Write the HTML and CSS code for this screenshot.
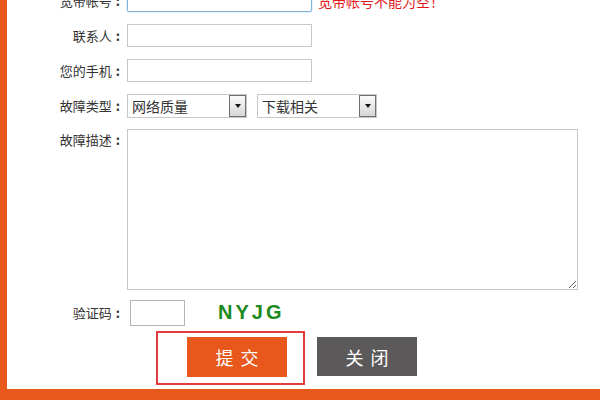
FILE: index.html
```html
<!DOCTYPE html>
<html lang="zh-CN">
<head>
<meta charset="utf-8">
<title>故障申报</title>
<link rel="stylesheet" href="styles.css">
</head>
<body>
<div class="frame">
  <form class="form">
    <div class="row r1">
      <label class="label">宽带帐号<span class="colon">:</span></label>
      <input class="field focus" type="text">
      <span class="error">宽带帐号不能为空！</span>
    </div>
    <div class="row r2">
      <label class="label">联系人<span class="colon">:</span></label>
      <input class="field" type="text">
    </div>
    <div class="row r2">
      <label class="label">您的手机<span class="colon">:</span></label>
      <input class="field" type="text">
    </div>
    <div class="row r2">
      <label class="label">故障类型<span class="colon">:</span></label>
      <div class="select"><span class="sel-text">网络质量</span><span class="sel-btn"><span class="tri"></span></span></div>
      <div class="select second"><span class="sel-text">下载相关</span><span class="sel-btn"><span class="tri"></span></span></div>
    </div>
    <div class="row r-desc">
      <label class="label top">故障描述<span class="colon">:</span></label>
      <textarea class="desc"></textarea>
    </div>
    <div class="row r-code">
      <label class="label">验证码<span class="colon">:</span></label>
      <input class="code" type="text">
      <span class="captcha">NYJG</span>
    </div>
    <div class="row r-btns">
      <div class="outline">
        <button type="button" class="btn submit">提交</button>
      </div>
      <button type="button" class="btn close">关闭</button>
    </div>
  </form>
</div>
</body>
</html>
```

FILE: styles.css
```css
html, body {
  margin: 0;
  padding: 0;
  background: #fff;
  overflow: hidden;
}
.frame {
  width: 600px;
  height: 400px;
  box-sizing: border-box;
  border-left: 7px solid #e8581d;
  border-bottom: 11px solid #e8581d;
  overflow: hidden;
  font-family: "Noto Sans CJK SC", "Microsoft YaHei", sans-serif;
  font-size: 13px;
  color: #333;
}
.form {
  display: flex;
  flex-direction: column;
  margin-top: -11px;
}
.row {
  display: flex;
  align-items: center;
}
.r2 { margin-top: 12px; }
.r-desc { margin-top: 11px; align-items: flex-start; }
.r-code { margin-top: 10px; }
.r-btns { margin-top: 5px; padding-left: 149px; align-items: flex-start; }
.label {
  width: 115px;
  margin-right: 5px;
  text-align: right;
  font-size: 13px;
  color: #333;
  line-height: 16px;
}
.colon {
  display: inline-block;
  margin-left: 4px;
  margin-right: 2px;
  font-weight: bold;
}
.label.top { margin-top: 3px; }
.field {
  width: 185px;
  height: 23px;
  box-sizing: border-box;
  border: 1px solid #c8c8c8;
  padding: 0 4px;
  margin: 0;
  outline: none;
}
.field.focus {
  border-color: #7fb3d6;
  border-radius: 2px;
  box-shadow: 0 0 2px #a9d0ea;
}
.error {
  margin-left: 6px;
  color: #e3191c;
  font-size: 14px;
}
.select {
  width: 120px;
  height: 24px;
  box-sizing: border-box;
  border: 1px solid #c8c8c8;
  display: flex;
  align-items: center;
  justify-content: space-between;
  background: #fff;
}
.select.second { margin-left: 10px; }
.sel-text {
  padding-left: 4px;
  color: #333;
  font-size: 14px;
}
.sel-btn {
  width: 15px;
  height: 20px;
  border: 1px solid #707070;
  background: linear-gradient(#fbfbfb, #d6d6d6);
  display: flex;
  align-items: center;
  justify-content: center;
}
.tri {
  width: 0;
  height: 0;
  border-left: 3.5px solid transparent;
  border-right: 3.5px solid transparent;
  border-top: 4px solid #111;
}
.desc {
  width: 451px;
  height: 161px;
  box-sizing: border-box;
  border: 1px solid #c8c8c8;
  margin: 0;
  padding: 2px;
  resize: both;
  outline: none;
}
.code {
  width: 55px;
  height: 26px;
  box-sizing: border-box;
  border: 1px solid #b5b5b5;
  margin: 0 0 0 3px;
  outline: none;
}
.captcha {
  margin-left: 33px;
  font-family: "Liberation Sans", Arial, sans-serif;
  font-weight: bold;
  font-size: 20px;
  letter-spacing: 3px;
  color: #1d8a1d;
  line-height: 20px;
  margin-top: -2px;
}
.outline {
  border: 2px solid #e33b3b;
  padding: 4px 16px 6px 29px;
}
.btn {
  width: 100px;
  height: 40px;
  border: none;
  margin: 0;
  color: #fff;
  font-family: "Noto Sans CJK SC", "Microsoft YaHei", sans-serif;
  font-size: 18px;
  letter-spacing: 7px;
  padding: 0 0 0 7px;
  cursor: pointer;
}
.submit { background: #e8581d; }
.close {
  background: #5b5959;
  margin-left: 12px;
  margin-top: 6px;
  height: 39px;
}
```
